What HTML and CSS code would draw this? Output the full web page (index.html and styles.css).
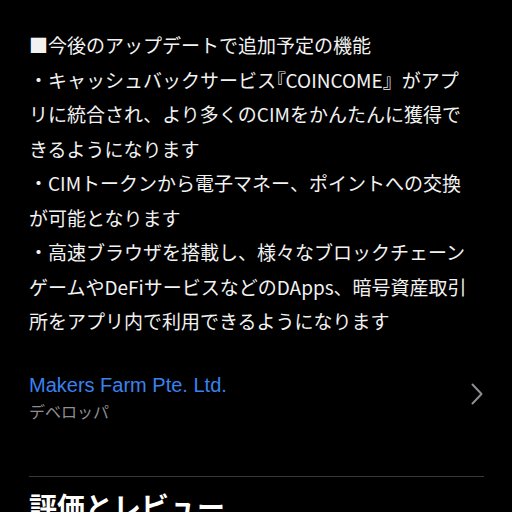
FILE: index.html
```html
<!DOCTYPE html>
<html lang="ja">
<head>
<meta charset="utf-8">
<link rel="stylesheet" href="styles.css">
</head>
<body>
<div class="page">
  <p class="notes">■今後のアップデートで追加予定の機能<br>・キャッシュバックサービス<span class="pal">『</span>COINCOME』がアプ<br>リに統合され、より多くのCIMをかんたんに獲得で<br>きるようになります<br>・CIMトークンから電子マネー、ポイントへの交換<br>が可能となります<br>・高速ブラウザを搭載し、様々なブロックチェーン<br>ゲームやDeFiサービスなどのDApps、暗号資産取引<br>所をアプリ内で利用できるようになります</p>
  <div class="dev-row">
    <div class="dev-info">
      <div class="dev-name">Makers Farm Pte. Ltd.</div>
      <div class="dev-label">デベロッパ</div>
    </div>
    <svg class="chevron" width="12" height="22" viewBox="0 0 12 22"><path d="M1.5 1.5 L10.5 11 L1.5 20.5" fill="none" stroke="#8e8e93" stroke-width="2" stroke-linecap="round" stroke-linejoin="round"/></svg>
  </div>
  <div class="sep"></div>
  <h2 class="heading">評価とレビュー</h2>
</div>
</body>
</html>
```
FILE: styles.css
```css
html, body {
  margin: 0;
  padding: 0;
  background: #000;
}
body {
  font-family: "Noto Sans CJK JP", "Noto Sans", sans-serif;
  color: #f2f2f2;
  overflow: hidden;
}
.page {
  padding: 28px 28px 0 29px;
}
.notes {
  margin: 0;
  font-size: 19px;
  line-height: 34.5px;
  white-space: nowrap;
  color: #f2f2f2;
}
.pal {
  font-feature-settings: "palt";
}
.dev-row {
  display: flex;
  justify-content: space-between;
  align-items: flex-start;
  margin-top: 34px;
}
.dev-name {
  font-family: "Liberation Sans", "Noto Sans CJK JP", sans-serif;
  font-size: 20px;
  line-height: 24px;
  color: #3a82f0;
}
.dev-label {
  font-size: 16px;
  line-height: 28px;
  color: #8e8e93;
}
.chevron {
  margin-top: 10px;
  margin-right: 1px;
}
.sep {
  margin-top: 51px;
  height: 1px;
  background: #38383a;
}
.heading {
  margin: 12px 0 0 0;
  font-size: 28px;
  line-height: 34px;
  font-weight: 700;
  color: #fff;
}
```
